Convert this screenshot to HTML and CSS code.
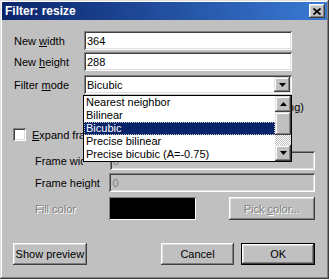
FILE: index.html
```html
<!DOCTYPE html>
<html lang="en">
<head>
    <meta charset="UTF-8">
    <title>Filter: resize</title>
    <link rel="stylesheet" href="styles.css">
</head>
<body>
<div class="window">
    <div class="titlebar">
        <span class="title">Filter: resize</span>
        <span class="close-btn">
            <svg width="8" height="7" viewBox="0 0 8 7"><path d="M0.5 0.5L7.5 6.5M7.5 0.5L0.5 6.5" stroke="#000" stroke-width="1.7"/></svg>
        </span>
    </div>

    <div class="content">
        <div class="row row-top r1">
            <span class="label">New <u>w</u>idth</span>
            <div class="field">364</div>
        </div>
        <div class="row row-top r2">
            <span class="label">New <u>h</u>eight</span>
            <div class="field">288</div>
        </div>
        <div class="row row-top r3">
            <span class="label">Filter <u>m</u>ode</span>
            <div class="field select">
                <span>Bicubic</span>
                <span class="drop-btn">
                    <svg width="7" height="4" viewBox="0 0 7 4"><path d="M0 0H7L3.5 4Z" fill="#000"/></svg>
                </span>
            </div>
        </div>
        <div class="row r4">
            <span class="note">Interlaced (field-based resampling)</span>
        </div>
        <div class="row r5">
            <span class="checkbox"></span>
            <span class="label-clip"><span><u>E</u>xpand frame and letterbox image</span></span>
        </div>
        <div class="row row-sub r6">
            <span class="label clip">Frame width</span>
            <div class="field disabled">0</div>
        </div>
        <div class="row row-sub r7">
            <span class="label">Frame height</span>
            <div class="field disabled">0</div>
        </div>
        <div class="row row-sub r8">
            <span class="label disabled-text">Fill color</span>
            <div class="swatch"></div>
            <div class="button pick disabled-text"><span>Pick <u>c</u>olor...</span></div>
        </div>
        <div class="row r9">
            <div class="button preview">Show preview</div>
            <div class="button cancel">Cancel</div>
            <div class="button default">OK</div>
        </div>
    </div>

    <!-- open combo box list, drawn over the dialog -->
    <div class="dropdown-list">
        <div class="items">
            <div class="item">Nearest neighbor</div>
            <div class="item">Bilinear</div>
            <div class="item selected">Bicubic</div>
            <div class="item">Precise bilinear</div>
            <div class="item">Precise bicubic (A=-0.75)</div>
        </div>
        <div class="scrollbar">
            <div class="scroll-btn">
                <svg width="7" height="4" viewBox="0 0 7 4"><path d="M3.5 0L7 4H0Z" fill="#000"/></svg>
            </div>
            <div class="thumb"></div>
            <div class="track"></div>
            <div class="scroll-btn">
                <svg width="7" height="4" viewBox="0 0 7 4"><path d="M0 0H7L3.5 4Z" fill="#000"/></svg>
            </div>
        </div>
    </div>
</div>
</body>
</html>
```

FILE: styles.css
```css
body {
    margin: 0;
    font-family: "Liberation Sans", Arial, sans-serif;
    font-size: 11px;
    color: #000;
    background: #c0c0c0;
}

u {
    text-decoration: underline;
    text-underline-offset: 1px;
}

.window {
    position: relative;
    width: 329px;
    height: 279px;
    box-sizing: border-box;
    padding: 2px;
    background: #c0c0c0;
    box-shadow: inset -1px -1px #404040, inset 1px 1px #dfdfdf,
                inset -2px -2px #808080, inset 2px 2px #fff;
    overflow: hidden;
}

.titlebar {
    display: flex;
    align-items: center;
    justify-content: space-between;
    height: 18px;
    padding: 0 2px 0 3px;
    background: linear-gradient(to right, #0a246a, #3a7ad4);
}

.title {
    color: #fff;
    font-weight: bold;
    font-size: 12px;
}

.close-btn {
    display: flex;
    align-items: center;
    justify-content: center;
    width: 16px;
    height: 14px;
    box-sizing: border-box;
    background: #c0c0c0;
    box-shadow: inset -1px -1px #404040, inset 1px 1px #fff,
                inset -2px -2px #808080, inset 2px 2px #dfdfdf;
}

.content {
    padding: 0 12px;
}

.row {
    display: flex;
    align-items: center;
}

.r1 { margin-top: 11px; height: 19px; }
.r2 { margin-top: 2px; height: 19px; }
.r3 { margin-top: 4px; height: 19px; }
.r4 { margin-top: 6px; height: 14px; }
.r5 { margin-top: 13px; height: 15px; }
.r6 { margin-top: 9px; height: 19px; }
.r7 { margin-top: 3px; height: 19px; }
.r8 { margin-top: 5px; height: 23px; }
.r9 { margin-top: 23px; height: 22px; }

.row-top .label {
    width: 70px;
}

.row-top .field {
    width: 208px;
}

.row-sub .label {
    width: 75px;
    margin-left: 21px;
    white-space: nowrap;
}

/* labels that run under the open list are cut where the list starts */
.row-sub .label.clip {
    width: 48px;
    margin-right: 27px;
    overflow: hidden;
}

.row-sub .field {
    width: 207px;
}

.field {
    height: 19px;
    box-sizing: border-box;
    display: flex;
    align-items: center;
    padding-left: 3px;
    background: #fff;
    box-shadow: inset 1px 1px #808080, inset -1px -1px #fff,
                inset 2px 2px #404040, inset -2px -2px #dfdfdf;
}

.field.disabled {
    background: #c0c0c0;
    color: #808080;
}

.select {
    justify-content: space-between;
    padding-right: 2px;
}

.drop-btn {
    display: flex;
    align-items: center;
    justify-content: center;
    width: 16px;
    height: 15px;
    box-sizing: border-box;
    background: #c0c0c0;
    box-shadow: inset -1px -1px #404040, inset 1px 1px #dfdfdf,
                inset -2px -2px #808080, inset 2px 2px #fff;
}

.note {
    display: flex;
    justify-content: flex-end;
    margin-left: 278px;
    width: 12px;
    overflow: hidden;
    white-space: nowrap;
}

.checkbox {
    width: 13px;
    height: 13px;
    margin-left: -1px;
    margin-right: 6px;
    box-sizing: border-box;
    background: #fff;
    box-shadow: inset 1px 1px #808080, inset -1px -1px #fff,
                inset 2px 2px #404040, inset -2px -2px #dfdfdf;
}

.label-clip {
    width: 51px;
    overflow: hidden;
    white-space: nowrap;
}

.disabled-text {
    color: #808080;
    text-shadow: 1px 1px #fff;
}

.swatch {
    width: 87px;
    height: 23px;
    box-sizing: border-box;
    background: #000;
    box-shadow: inset 1px 1px #808080, inset -1px -1px #fff;
}

.button {
    display: flex;
    align-items: center;
    justify-content: center;
    width: 74px;
    height: 22px;
    box-sizing: border-box;
    background: #c0c0c0;
    white-space: nowrap;
    box-shadow: inset -1px -1px #404040, inset 1px 1px #fff,
                inset -2px -2px #808080, inset 2px 2px #dfdfdf;
}

.button.pick {
    width: 87px;
    height: 23px;
    margin-left: 33px;
}

.button.preview {
    margin-left: -1px;
}

.button.cancel {
    margin-left: 74px;
}

.button.default {
    margin-left: 7px;
    box-shadow: inset 0 0 0 1px #000, inset -2px -2px #404040, inset 2px 2px #fff,
                inset -3px -3px #808080, inset 3px 3px #dfdfdf;
}

.dropdown-list {
    position: absolute;
    left: 83px;
    top: 95px;
    width: 209px;
    height: 67px;
    box-sizing: border-box;
    border: 1px solid #000;
    background: #fff;
    display: flex;
}

.items {
    flex: 1;
}

.item {
    height: 13px;
    line-height: 13px;
    padding-left: 2px;
    white-space: nowrap;
    overflow: hidden;
    box-sizing: border-box;
}

.item.selected {
    background: #0a246a;
    color: #fff;
    outline: 1px dotted #c0c0c0;
    outline-offset: -1px;
}

.scrollbar {
    width: 16px;
    display: flex;
    flex-direction: column;
}

.scroll-btn {
    display: flex;
    align-items: center;
    justify-content: center;
    height: 16px;
    box-sizing: border-box;
    background: #c0c0c0;
    box-shadow: inset -1px -1px #404040, inset 1px 1px #dfdfdf,
                inset -2px -2px #808080, inset 2px 2px #fff;
}

.thumb {
    height: 23px;
    box-sizing: border-box;
    background: #c0c0c0;
    box-shadow: inset -1px -1px #404040, inset 1px 1px #dfdfdf,
                inset -2px -2px #808080, inset 2px 2px #fff;
}

.track {
    flex: 1;
    background: repeating-conic-gradient(#fff 0 25%, #c0c0c0 0 50%) 0 0 / 2px 2px;
}
```
